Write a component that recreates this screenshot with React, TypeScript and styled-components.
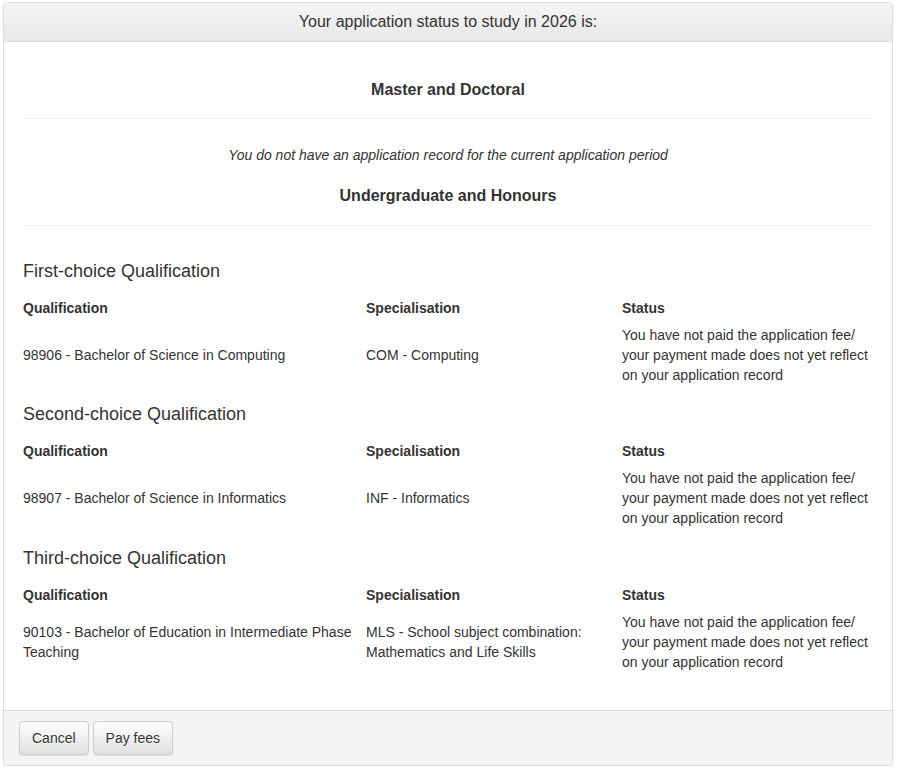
import React from "react";
import styled, { createGlobalStyle } from "styled-components";

const Global = createGlobalStyle`
  html, body { margin: 0; padding: 0; background: #fff; }
  body {
    font-family: "Liberation Sans", Arial, Helvetica, sans-serif;
    font-size: 14px;
    line-height: 20px;
    color: #333;
  }
  * { box-sizing: border-box; }
`;

const Page = styled.div`
  padding: 2px 5px 0 3px;
`;

const Panel = styled.div`
  width: 890px;
  border: 1px solid #ddd;
  border-radius: 4px;
  background: #fff;
  box-shadow: 0 1px 2px rgba(0, 0, 0, 0.05);
  overflow: hidden;
`;

const Heading = styled.div`
  padding: 10px 15px;
  line-height: 18px;
  font-size: 16px;
  text-align: center;
  color: #333;
  background-image: linear-gradient(to bottom, #f5f5f5 0, #e8e8e8 100%);
  border-bottom: 1px solid #ddd;
`;

const Body = styled.div`
  padding: 38px 19px 38px 19px;
`;

const GroupTitle = styled.h3`
  margin: 0;
  font-size: 16px;
  font-weight: bold;
  line-height: 20px;
  text-align: center;
`;

const Rule = styled.hr<{ $top: number; $bottom: number }>`
  margin: ${(p) => p.$top}px 0 ${(p) => p.$bottom}px;
  border: 0;
  border-top: 1px solid #eee;
  height: 0;
`;

const Notice = styled.p`
  margin: 0 0 21px;
  font-style: italic;
  text-align: center;
`;

const Section = styled.section`
  & + & {
    margin-top: 19.5px;
  }
`;

const ChoiceTitle = styled.h4`
  margin: 0;
  font-size: 18px;
  font-weight: 500;
  line-height: 20px;
  color: #333;
`;

const Row = styled.div<{ $head?: boolean }>`
  display: grid;
  grid-template-columns: 343px 256px 1fr;
  align-items: center;
  margin-top: ${(p) => (p.$head ? "17px" : "7px")};
  font-weight: ${(p) => (p.$head ? "bold" : "normal")};
`;

const Cell = styled.div`
  padding-right: 6px;
  &:last-child {
    padding-right: 0;
  }
`;

const Footer = styled.div`
  padding: 10px 15px;
  background: #f5f5f5;
  border-top: 1px solid #ddd;
  display: flex;
  gap: 4px;
`;

const Button = styled.button`
  font-family: inherit;
  font-size: 14px;
  line-height: 20px;
  height: 34px;
  padding: 6px 12px;
  color: #333;
  border: 1px solid #ccc;
  border-radius: 4px;
  background-image: linear-gradient(to bottom, #fff 0, #e0e0e0 100%);
  text-shadow: 0 1px 0 #fff;
  box-shadow: inset 0 1px 0 rgba(255, 255, 255, 0.15), 0 1px 1px rgba(0, 0, 0, 0.075);
  cursor: pointer;
`;

const STATUS =
  "You have not paid the application fee/ your payment made does not yet reflect on your application record";

const choices = [
  {
    title: "First-choice Qualification",
    qual: "98906 - Bachelor of Science in Computing",
    spec: "COM - Computing",
  },
  {
    title: "Second-choice Qualification",
    qual: "98907 - Bachelor of Science in Informatics",
    spec: "INF - Informatics",
  },
  {
    title: "Third-choice Qualification",
    qual: "90103 - Bachelor of Education in Intermediate Phase Teaching",
    spec: "MLS - School subject combination: Mathematics and Life Skills",
  },
];

export default function App() {
  return (
    <>
      <Global />
      <Page>
        <Panel>
          <Heading>Your application status to study in 2026 is:</Heading>
          <Body>
            <GroupTitle>Master and Doctoral</GroupTitle>
            <Rule $top={18} $bottom={26} />
            <Notice>You do not have an application record for the current application period</Notice>
            <GroupTitle>Undergraduate and Honours</GroupTitle>
            <Rule $top={19} $bottom={34.5} />
            {choices.map((c) => (
              <Section key={c.title}>
                <ChoiceTitle>{c.title}</ChoiceTitle>
                <Row $head>
                  <Cell>Qualification</Cell>
                  <Cell>Specialisation</Cell>
                  <Cell>Status</Cell>
                </Row>
                <Row>
                  <Cell>{c.qual}</Cell>
                  <Cell>{c.spec}</Cell>
                  <Cell>{STATUS}</Cell>
                </Row>
              </Section>
            ))}
          </Body>
          <Footer>
            <Button>Cancel</Button>
            <Button>Pay fees</Button>
          </Footer>
        </Panel>
      </Page>
    </>
  );
}
